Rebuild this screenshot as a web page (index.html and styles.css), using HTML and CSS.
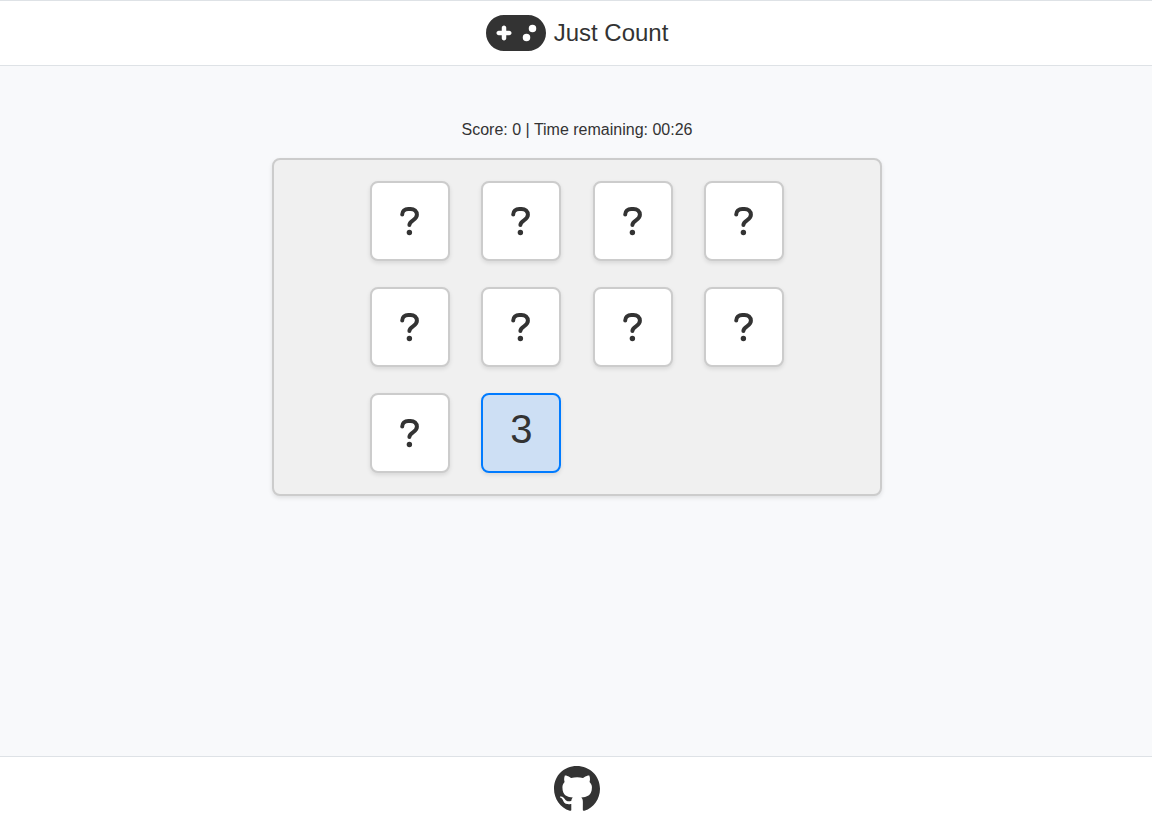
FILE: index.html
```
<!DOCTYPE html>
<html lang="en">
<head>
<meta charset="utf-8">
<title>Just Count</title>
<meta name="viewport" content="width=device-width, initial-scale=1">
<link rel="stylesheet" href="styles.css">
</head>
<body>
<svg class="sprite" aria-hidden="true">
  <symbol id="question" viewBox="0 0 20 32">
    <path d="M2.200 9.400C2.200 6.200 4.800 3.900 8.200 3.900h2.400c3.500 0 6.300 2.500 6.300 5.900 0 5.800-7.500 5.200-7.500 10.300" fill="none" stroke="currentColor" stroke-width="4" stroke-linecap="round"/>
    <circle cx="9.400" cy="27.500" r="2.700"/>
  </symbol>
</svg>
<header class="bar header">
  <svg class="logo" viewBox="0 0 640 512" aria-hidden="true"><path d="M192 64C86 64 0 150 0 256S86 448 192 448H448c106 0 192-86 192-192s-86-192-192-192H192zM496 168a40 40 0 1 1 0 80 40 40 0 1 1 0-80zM392 304a40 40 0 1 1 80 0 40 40 0 1 1 -80 0zM168 200c0-13.300 10.700-24 24-24s24 10.700 24 24v32h32c13.300 0 24 10.700 24 24s-10.700 24-24 24H216v32c0 13.300-10.700 24-24 24s-24-10.700-24-24V280H136c-13.300 0-24-10.700-24-24s10.700-24 24-24h32V200z"/></svg>
  <h1 class="title">Just Count</h1>
</header>
<main class="main">
  <p class="status">Score: 0 | Time remaining: 00:26</p>
  <section class="board" aria-label="Cards">
    <div class="cards">
      <button class="card" type="button" aria-label="Card 1"><svg class="mark"><use href="#question"/></svg></button>
      <button class="card" type="button" aria-label="Card 2"><svg class="mark"><use href="#question"/></svg></button>
      <button class="card" type="button" aria-label="Card 3"><svg class="mark"><use href="#question"/></svg></button>
      <button class="card" type="button" aria-label="Card 4"><svg class="mark"><use href="#question"/></svg></button>
      <button class="card" type="button" aria-label="Card 5"><svg class="mark"><use href="#question"/></svg></button>
      <button class="card" type="button" aria-label="Card 6"><svg class="mark"><use href="#question"/></svg></button>
      <button class="card" type="button" aria-label="Card 7"><svg class="mark"><use href="#question"/></svg></button>
      <button class="card" type="button" aria-label="Card 8"><svg class="mark"><use href="#question"/></svg></button>
      <button class="card" type="button" aria-label="Card 9"><svg class="mark"><use href="#question"/></svg></button>
      <button class="card card-open" type="button">3</button>
    </div>
  </section>
</main>
<footer class="bar footer">
  <a class="github" href="https://github.com" aria-label="GitHub">
    <svg class="github-icon" viewBox="0 0 496 512"><path d="M244.800 8C106.100 8 0 113.300 0 252c0 110.900 69.800 205.800 169.500 239.200 12.800 2.300 17.300-5.600 17.300-12.100 0-6.200-.3-40.400-.3-61.400 0 0-70 15-84.700-29.800 0 0-11.400-29.100-27.800-36.600 0 0-22.900-15.700 1.600-15.400 0 0 24.900 2 38.600 25.800 21.900 38.600 58.600 27.500 72.900 20.900 2.300-16 8.800-27.100 16-33.700-55.900-6.200-112.300-14.300-112.300-110.500 0-27.500 7.600-41.300 23.600-58.900-2.600-6.500-11.100-33.300 2.600-67.900 20.900-6.500 69 27 69 27 20-5.600 41.500-8.500 62.800-8.500s42.800 2.900 62.800 8.500c0 0 48.100-33.600 69-27 13.700 34.700 5.200 61.400 2.600 67.900 16 17.700 25.800 31.500 25.800 58.900 0 96.500-58.900 104.200-114.800 110.500 9.200 7.900 17 22.900 17 46.400 0 33.700-.3 75.400-.3 83.600 0 6.500 4.600 14.400 17.300 12.100C428.200 457.800 496 362.900 496 252 496 113.300 383.500 8 244.800 8z"/></svg>
  </a>
</footer>
</body>
</html>
```
FILE: styles.css
```
* {
  box-sizing: border-box;
}

body {
  display: flex;
  flex-direction: column;
  min-height: 100vh;
  margin: 0;
  background: #f8f9fa;
  color: #333;
  font: 16px/24px "Liberation Sans", Arial, sans-serif;
}

.sprite {
  display: none;
}

svg {
  display: block;
  fill: currentColor;
}

.bar {
  display: flex;
  align-items: center;
  justify-content: center;
  background: #fff;
  padding: 8px 0 8px 2px;
}

.header {
  gap: 8px;
  border-top: 1px solid #dee2e6;
  border-bottom: 1px solid #dee2e6;
}

.logo {
  width: 60px;
  height: 48px;
}

.title {
  margin: 0;
  font-size: 24px;
  font-weight: 400;
  line-height: 32px;
}

.main {
  flex: 1;
  display: flex;
  flex-direction: column;
  align-items: center;
  gap: 16px;
  padding: 52px 0 48px 2px;
  background: #f8f9fb;
}

.status {
  margin: 0;
}

.board {
  width: 100%;
  max-width: 610px;
  padding: 21px 16px;
  border: 2px solid #ccc;
  border-radius: 8px;
  background: #f0f0f0;
  box-shadow: 0 2px 4px rgba(0, 0, 0, 0.1);
}

.cards {
  display: grid;
  grid-template-columns: repeat(4, 1fr);
  justify-items: center;
  row-gap: 26px;
  max-width: 446px;
  margin: 0 auto;
}

.card {
  display: flex;
  align-items: center;
  justify-content: center;
  width: 80px;
  height: 80px;
  padding: 0;
  border: 2px solid #ccc;
  border-radius: 8px;
  background: #fff;
  box-shadow: 0 2px 4px rgba(0, 0, 0, 0.1);
  color: #333;
  font: inherit;
  cursor: pointer;
}

.card-open {
  padding-bottom: 8px;
  border-color: #007bff;
  background: #cddff4;
  font-size: 40px;
}

.mark {
  width: 20px;
  height: 32px;
}

.footer {
  padding-bottom: 7px;
  border-top: 1px solid #dee2e6;
}

.github {
  color: inherit;
}

.github-icon {
  width: 46px;
  height: 48px;
}
```
